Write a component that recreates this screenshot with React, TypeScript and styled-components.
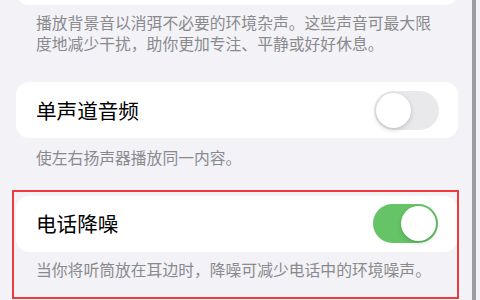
import React from "react";
import styled, { createGlobalStyle } from "styled-components";

const Global = createGlobalStyle`
  html, body { margin: 0; padding: 0; background: #f2f2f7; }
  body { font-family: "Noto Sans CJK SC", "Noto Sans", sans-serif; }
`;

const Page = styled.div`
  display: flex;
  width: 480px;
  height: 300px;
  overflow: hidden;
  background: #f2f2f7;
`;

const Content = styled.div`
  width: 472px;
  display: flex;
  flex-direction: column;
`;

const Rail = styled.div`
  width: 4px;
  height: 300px;
  background: #9d9d9f;
`;

const Group = styled.div<{ $top: number; $gap: number }>`
  display: flex;
  flex-direction: column;
  padding-left: 16px;
  margin-top: ${(p) => p.$top}px;
  margin-bottom: ${(p) => p.$gap}px;
`;

const Highlight = styled.div`
  margin-left: 12px;
  width: 447px;
  height: 109px;
  box-sizing: border-box;
  border: 2px solid #f0393c;
  padding: 4px 0 0 2px;
  display: flex;
  flex-direction: column;
`;

const Card = styled.div<{ $w?: number }>`
  width: ${(p) => p.$w ?? 442}px;
  height: 56px;
  box-sizing: border-box;
  background: #ffffff;
  border-radius: 13px;
  padding: 0 19px 0 20px;
  display: flex;
  align-items: center;
  justify-content: space-between;
`;

const Title = styled.span`
  font-size: 20.6px;
  color: #000;
  line-height: 1;
`;

const Note = styled.p<{ $top: number }>`
  margin: 0;
  padding: ${(p) => p.$top}px 20px 0 20px;
  width: 442px;
  box-sizing: border-box;
  font-size: 15.8px;
  line-height: 21px;
  color: #8a8a8e;
`;

const Track = styled.div<{ $on: boolean }>`
  width: 65px;
  height: 39px;
  border-radius: 20px;
  background: ${(p) => (p.$on ? "#65c466" : "#e9e9eb")};
  padding: 2px;
  box-sizing: border-box;
  display: flex;
  justify-content: ${(p) => (p.$on ? "flex-end" : "flex-start")};
`;

const Knob = styled.div`
  width: 35px;
  height: 35px;
  border-radius: 50%;
  background: #fff;
  box-shadow: 0 2px 5px rgba(0, 0, 0, 0.16), 0 0 1px rgba(0, 0, 0, 0.12);
`;

const Toggle = ({ on }: { on: boolean }) => (
  <Track $on={on}>
    <Knob />
  </Track>
);

export default function App() {
  return (
    <>
      <Global />
      <Page>
        <Content>
          <Group $top={-51} $gap={28.5}>
            <Card />
            <Note $top={6.5}>
              播放背景音以消弭不必要的环境杂声。这些声音可最大限度地减少干扰，助你更加专注、平静或好好休息。
            </Note>
          </Group>
          <Group $top={0} $gap={22}>
            <Card>
              <Title>单声道音频</Title>
              <Toggle on={false} />
            </Card>
            <Note $top={8.5}>使左右扬声器播放同一内容。</Note>
          </Group>
          <Highlight>
            <Card $w={441}>
              <Title>电话降噪</Title>
              <Toggle on={true} />
            </Card>
            <Note $top={7.5}>
              当你将听筒放在耳边时，降噪可减少电话中的环境噪声。
            </Note>
          </Highlight>
        </Content>
        <Rail />
      </Page>
    </>
  );
}
